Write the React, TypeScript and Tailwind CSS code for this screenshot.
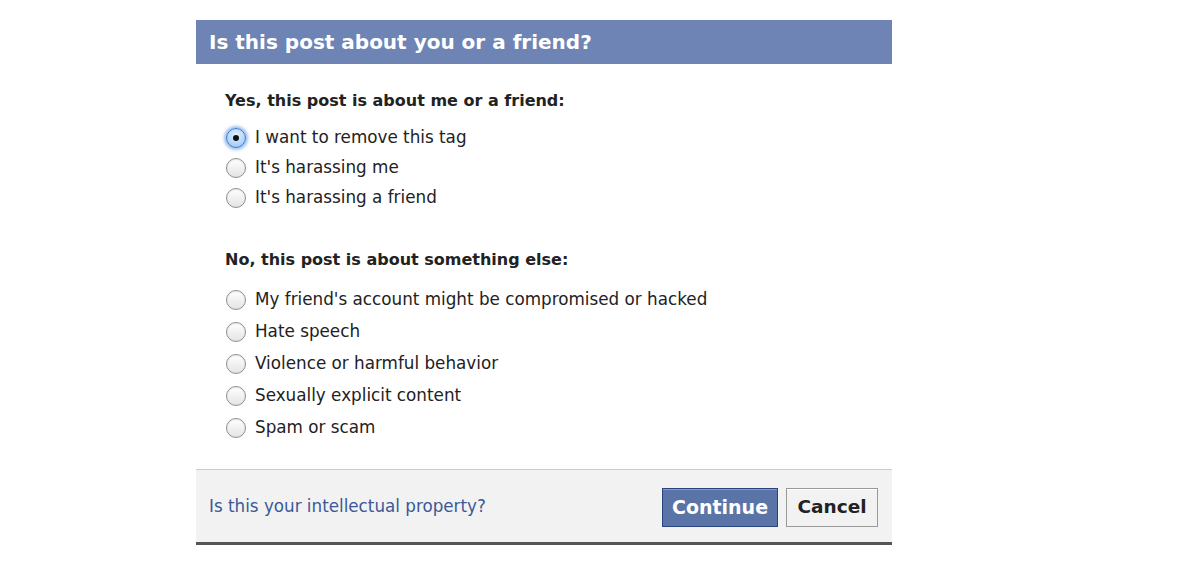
import { useState } from "react";

const yesOptions = [
  "I want to remove this tag",
  "It's harassing me",
  "It's harassing a friend",
];

const noOptions = [
  "My friend's account might be compromised or hacked",
  "Hate speech",
  "Violence or harmful behavior",
  "Sexually explicit content",
  "Spam or scam",
];

function Radio({ checked }: { checked: boolean }) {
  if (checked) {
    return (
      <span className="flex h-[20px] w-[20px] shrink-0 items-center justify-center rounded-full border border-[#3f78c9] bg-[radial-gradient(circle_at_50%_35%,#e6f2ff,#8ec0f2)] shadow-[0_0_3px_2px_rgba(90,150,230,0.6)]">
        <span className="h-[6px] w-[6px] rounded-full bg-[#111]" />
      </span>
    );
  }
  return (
    <span className="h-[20px] w-[20px] shrink-0 rounded-full border border-[#8e8e8e] bg-[linear-gradient(#ffffff,#e4e4e4)] shadow-[inset_0_1px_1px_rgba(0,0,0,0.08)]" />
  );
}

export default function App() {
  const [selected, setSelected] = useState(yesOptions[0]);

  return (
    <div className="min-h-[569px] w-full bg-white font-['DejaVu_Sans',sans-serif] text-[#333]">
      <div className="ml-[196px] w-[696px] pt-[20px]">
        <div className="flex h-[44px] items-center bg-[#6d84b4] px-[13px] text-[20px] font-bold text-white">
          Is this post about you or a friend?
        </div>

        <div className="pb-[25px] pl-[30px] pr-[29px] pt-[27px]">
          <div className="-ml-[1px] h-[20px] text-[16px] font-bold leading-[20px] text-[#222]">
            Yes, this post is about me or a friend:
          </div>
          <div className="mt-[12px]">
            {yesOptions.map((o) => (
              <label
                key={o}
                onClick={() => setSelected(o)}
                className="flex h-[30px] cursor-pointer items-center gap-[9px] text-[16.8px] text-[#222]"
              >
                <Radio checked={selected === o} />
                <span>{o}</span>
              </label>
            ))}
          </div>

          <div className="-ml-[1px] mt-[37px] h-[20px] text-[16px] font-bold leading-[20px] text-[#222]">
            No, this post is about something else:
          </div>
          <div className="mt-[14px]">
            {noOptions.map((o) => (
              <label
                key={o}
                onClick={() => setSelected(o)}
                className="flex h-[32px] cursor-pointer items-center gap-[9px] text-[16.8px] text-[#222]"
              >
                <Radio checked={selected === o} />
                <span>{o}</span>
              </label>
            ))}
          </div>
        </div>

        <div className="flex h-[73px] items-center justify-between border-t border-[#cccccc] bg-[#f2f2f2] pl-[13px] pr-[14px] pt-[2px]">
          <a href="#" className="text-[16.75px] text-[#3b5998]">
            Is this your intellectual property?
          </a>
          <div className="flex items-center gap-[8px]">
            <button className="h-[39px] w-[116px] border border-[#29447e] bg-[#5b74a8] text-[19px] font-bold text-white shadow-[inset_0_1px_0_#8a9cc2]">
              Continue
            </button>
            <button className="h-[39px] w-[92px] border border-[#999] bg-[#f2f2f2] text-[18.5px] font-bold text-[#222] shadow-[inset_0_1px_0_#fff]">
              Cancel
            </button>
          </div>
        </div>
        <div className="h-[3px] bg-[#555]" />
      </div>
    </div>
  );
}
